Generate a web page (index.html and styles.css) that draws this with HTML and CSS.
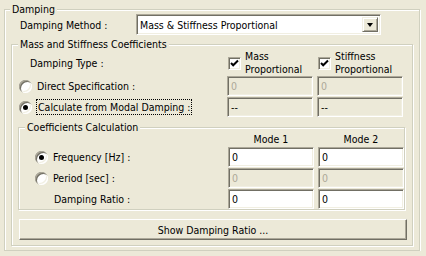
FILE: index.html
```html
<!DOCTYPE html>
<html lang="en">
<head>
    <meta charset="UTF-8">
    <title>Damping</title>
    <link rel="stylesheet" href="styles.css">
</head>
<body>
    <div class="group outer">
        <span class="caption">Damping</span>
        <div class="method-row">
            <span class="method-label">Damping Method :</span>
            <div class="combo">
                <span class="combo-text">Mass &amp; Stiffness Proportional</span>
                <span class="drop"><span class="arrow"></span></span>
            </div>
        </div>

        <div class="group coeffs">
            <span class="caption">Mass and Stiffness Coefficients</span>
            <div class="type-grid">
                <div class="type-label">Damping Type :</div>
                <div class="check-cell">
                    <span class="check"><svg width="9" height="9" viewBox="0 0 9 9"><path d="M1 4 L3.2 6.3 L8 1.5" stroke="#000" stroke-width="2" fill="none"/></svg></span>
                    <span class="check-text">Mass<br>Proportional</span>
                </div>
                <div class="check-cell">
                    <span class="check"><svg width="9" height="9" viewBox="0 0 9 9"><path d="M1 4 L3.2 6.3 L8 1.5" stroke="#000" stroke-width="2" fill="none"/></svg></span>
                    <span class="check-text">Stiffness<br>Proportional</span>
                </div>

                <div class="option"><span class="radio"></span><span>Direct Specification :</span></div>
                <div class="field disabled">0</div>
                <div class="field disabled">0</div>

                <div class="option"><span class="radio on"></span><span class="focus">Calculate from Modal Damping :</span></div>
                <div class="field disabled dark">--</div>
                <div class="field disabled dark">--</div>
            </div>

            <div class="group calc">
                <span class="caption">Coefficients Calculation</span>
                <div class="calc-grid">
                    <div></div>
                    <div class="mode">Mode 1</div>
                    <div class="mode">Mode 2</div>

                    <div class="option sub"><span class="radio on"></span><span>Frequency [Hz] :</span></div>
                    <div class="field">0</div>
                    <div class="field">0</div>

                    <div class="option sub"><span class="radio"></span><span>Period [sec] :</span></div>
                    <div class="field disabled">0</div>
                    <div class="field disabled">0</div>

                    <div class="ratio-label">Damping Ratio :</div>
                    <div class="field">0</div>
                    <div class="field">0</div>
                </div>
            </div>

            <div class="button">Show Damping Ratio ...</div>
        </div>
    </div>
</body>
</html>
```

FILE: styles.css
```css
body {
    margin: 0;
    background-color: #ece9d8;
    font-family: "DejaVu Sans Condensed", "Liberation Sans", sans-serif;
    font-size: 10.5px;
    color: #000;
}
.group {
    position: relative;
    box-sizing: border-box;
    border: 1px solid #d0d0bf;
    box-shadow: inset 1px 1px #fff, 1px 1px #fff;
}
.caption {
    position: absolute;
    top: -7px;
    line-height: 13px;
    padding: 0 2px;
    background-color: #ece9d8;
}
.outer {
    margin: 9px 0 0 4px;
    width: 416px;
    height: 242px;
    padding: 4px 0 0 6px;
}
.outer > .caption {
    left: 5px;
}
.method-row {
    display: flex;
    align-items: center;
    padding-left: 9px;
}
.method-label {
    width: 116px;
}
.combo {
    box-sizing: border-box;
    width: 245px;
    height: 21px;
    display: flex;
    align-items: center;
    justify-content: space-between;
    background-color: #fff;
    border: 1px solid;
    border-color: #aca899 #fff #fff #aca899;
    box-shadow: inset 1px 1px #716f64, inset -1px -1px #f1efe2;
    padding: 0 2px 0 3px;
}
.drop {
    box-sizing: border-box;
    width: 16px;
    height: 15px;
    display: flex;
    align-items: center;
    justify-content: center;
    background-color: #ece9d8;
    border: 1px solid;
    border-color: #f1efe2 #716f64 #716f64 #f1efe2;
    box-shadow: inset 1px 1px #fff, inset -1px -1px #aca899;
}
.arrow {
    width: 0;
    height: 0;
    border-left: 3.5px solid transparent;
    border-right: 3.5px solid transparent;
    border-top: 4px solid #000;
    margin-top: 1px;
}
.coeffs {
    margin-top: 9px;
    width: 402px;
    height: 202px;
    padding: 6px 0 0 0;
}
.coeffs > .caption {
    left: 6px;
}
.type-grid {
    display: grid;
    grid-template-columns: 204px 86px 86px;
    grid-template-rows: 24px 20px 20px;
    column-gap: 4px;
    row-gap: 1px;
    margin-left: 7px;
}
.type-label {
    display: flex;
    align-items: center;
    padding-left: 11px;
}
.check-cell {
    display: flex;
    align-items: center;
    padding-left: 1px;
}
.check {
    box-sizing: border-box;
    width: 13px;
    height: 13px;
    display: flex;
    align-items: center;
    justify-content: center;
    background-color: #fff;
    border: 1px solid;
    border-color: #aca899 #fff #fff #aca899;
    box-shadow: inset 1px 1px #716f64, inset -1px -1px #f1efe2;
    margin-right: 4px;
}
.check-text {
    line-height: 13px;
}
.option {
    display: flex;
    align-items: center;
    gap: 5px;
}
.option.sub {
    padding-left: 16px;
}
.radio {
    position: relative;
    width: 13px;
    height: 13px;
    border-radius: 50%;
    background-color: #fff;
    box-shadow: inset 1px 1px #aca899, inset 2px 2px #716f64, inset -1px -1px #fff, inset -2px -2px #f1efe2;
}
.radio.on::after {
    content: "";
    position: absolute;
    left: 4px;
    top: 4px;
    width: 5px;
    height: 5px;
    border-radius: 50%;
    background-color: #000;
}
.focus {
    outline: 1px dotted #000;
    padding: 1px 1px;
}
.field {
    box-sizing: border-box;
    height: 20px;
    display: flex;
    align-items: center;
    padding-left: 3px;
    background-color: #fff;
    border: 1px solid;
    border-color: #aca899 #fff #fff #aca899;
    box-shadow: inset 1px 1px #716f64, inset -1px -1px #f1efe2;
}
.field.disabled {
    background-color: #ece9d8;
    color: #aca899;
}
.field.dark {
    color: #000;
}
.calc {
    margin: 10px 0 0 6px;
    width: 387px;
    height: 83px;
    padding-top: 5px;
}
.calc > .caption {
    left: 6px;
}
.calc-grid {
    display: grid;
    grid-template-columns: 205px 86px 86px;
    grid-template-rows: 13px 20px 20px 20px;
    column-gap: 4px;
    row-gap: 1px;
}
.mode {
    text-align: center;
    line-height: 13px;
}
.ratio-label {
    display: flex;
    align-items: center;
    padding-left: 35px;
}
.button {
    box-sizing: border-box;
    margin: 9px 0 0 7px;
    width: 388px;
    height: 21px;
    display: flex;
    align-items: center;
    justify-content: center;
    border: 1px solid;
    border-color: #fff #716f64 #716f64 #fff;
    box-shadow: inset -1px -1px #aca899;
}
```
